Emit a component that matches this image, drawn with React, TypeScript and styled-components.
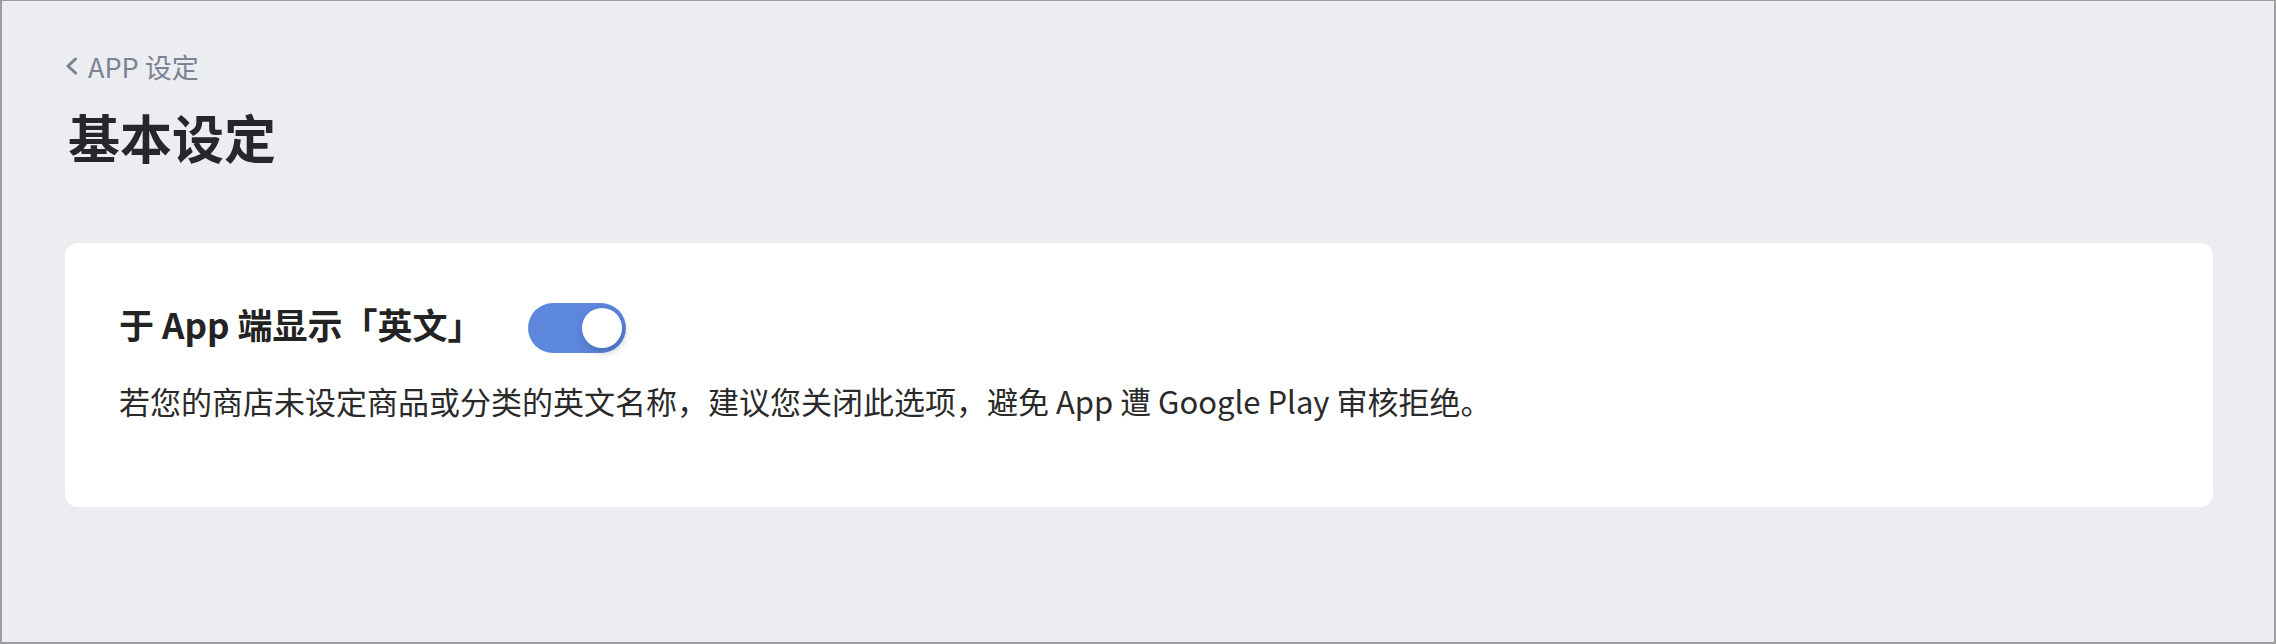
import React, { useState } from "react";
import styled, { createGlobalStyle } from "styled-components";

const GlobalStyle = createGlobalStyle`
  html, body {
    margin: 0;
    padding: 0;
    background: #ecedf0;
  }
  * {
    box-sizing: border-box;
  }
`;

const Frame = styled.div`
  width: 2276px;
  height: 644px;
  border: 2px solid #9d9d9f;
  border-top-width: 1px;
  background: #ecedf0;
  padding: 46px 61px 0 63px;
  font-family: "Noto Sans CJK SC", "Noto Sans", sans-serif;
`;

const Breadcrumb = styled.a`
  display: flex;
  align-items: center;
  gap: 10px;
  height: 38px;
  font-size: 27px;
  color: #7b8294;
  text-decoration: none;
  cursor: pointer;
`;

const Title = styled.h1`
  margin: 16px 0 0 3px;
  height: 72px;
  line-height: 72px;
  font-size: 52px;
  font-weight: 700;
  color: #25262e;
`;

const Card = styled.section`
  margin-top: 70px;
  background: #ffffff;
  border-radius: 13px;
  padding: 54px 56px 84px 54px;
`;

const SettingRow = styled.div`
  display: flex;
  align-items: center;
  gap: 46px;
  height: 58px;
`;

const SettingLabel = styled.span`
  font-size: 35px;
  font-weight: 700;
  color: #232323;
  margin-bottom: 6px;
`;

const Track = styled.button<{ $on: boolean }>`
  position: relative;
  width: 98px;
  height: 50px;
  margin-top: 4px;
  padding: 0;
  border: none;
  border-radius: 25px;
  background: ${(props) => (props.$on ? "#5c87dd" : "#c7cad1")};
  cursor: pointer;
  transition: background 0.2s;
`;

const Knob = styled.span<{ $on: boolean }>`
  position: absolute;
  top: 5px;
  left: ${(props) => (props.$on ? "54px" : "5px")};
  width: 40px;
  height: 40px;
  border-radius: 50%;
  background: #ffffff;
  box-shadow: 2px 4px 8px rgba(20, 30, 60, 0.25);
  transition: left 0.2s;
`;

const Description = styled.p`
  margin: 24px 0 0;
  font-size: 31px;
  line-height: 44px;
  color: #2a2a2a;
`;

const BackIcon = () => (
  <svg width="13" height="18" viewBox="0 0 13 18" fill="none">
    <polyline
      points="10.5,2 3,9 10.5,16"
      stroke="#7b8294"
      strokeWidth="3"
      strokeLinecap="round"
      strokeLinejoin="round"
    />
  </svg>
);

const Toggle = ({ value, onChange }: { value: boolean; onChange: (v: boolean) => void }) => (
  <Track $on={value} onClick={() => onChange(!value)} aria-pressed={value}>
    <Knob $on={value} />
  </Track>
);

const App = () => {
  const [showEnglish, setShowEnglish] = useState(true);

  return (
    <Frame>
      <GlobalStyle />
      <Breadcrumb>
        <BackIcon />
        APP 设定
      </Breadcrumb>
      <Title>基本设定</Title>
      <Card>
        <SettingRow>
          <SettingLabel>于 App 端显示「英文」</SettingLabel>
          <Toggle value={showEnglish} onChange={setShowEnglish} />
        </SettingRow>
        <Description>
          若您的商店未设定商品或分类的英文名称，建议您关闭此选项，避免 App 遭 Google Play 审核拒绝。
        </Description>
      </Card>
    </Frame>
  );
};

export default App;
